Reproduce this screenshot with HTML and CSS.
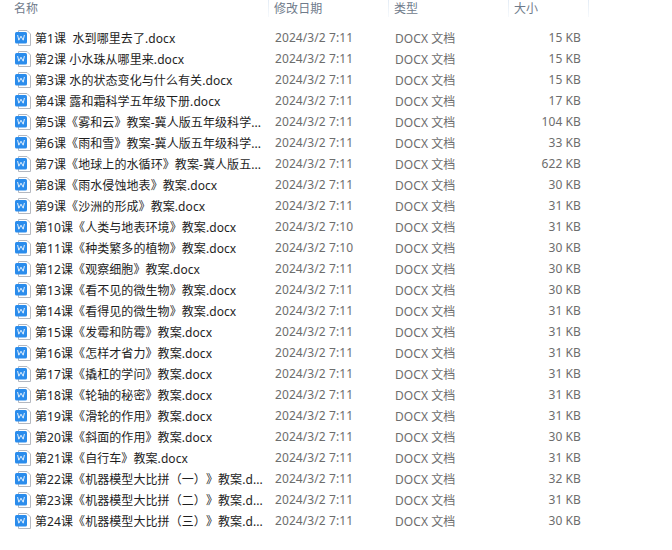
FILE: index.html
```html
<!DOCTYPE html>
<html lang="zh-CN">
<head>
  <meta charset="UTF-8">
  <title>文件列表</title>
  <link rel="stylesheet" href="styles.css">
</head>
<body>
  <svg class="sprite" width="0" height="0">
    <symbol id="docx" viewBox="0 0 16 16">
      <path d="M3.5 .5h8.5l3.5 3.5v11.5h-12z" fill="#fff" stroke="#b4b8c0"/>
      <rect x="0" y="2" width="12" height="11.5" rx="1.5" fill="#2a8cec"/>
      <path d="M2.6 5l1.2 5.2 2.2-4 2.2 4 1.2-5.2" fill="none" stroke="#e4f1fd" stroke-width="1"/>
    </symbol>
  </svg>
  <div class="header">
    <div class="head-cell">名称</div>
    <div class="head-cell">修改日期</div>
    <div class="head-cell">类型</div>
    <div class="head-cell">大小</div>
  </div>
  <div class="file-list">
    <div class="row"><span class="name"><svg class="icon"><use href="#docx"/></svg><span class="label">第1课&nbsp; 水到哪里去了.docx</span></span><span class="date">2024/3/2 7:11</span><span class="type">DOCX 文档</span><span class="size">15 KB</span></div>
    <div class="row"><span class="name"><svg class="icon"><use href="#docx"/></svg><span class="label">第2课 小水珠从哪里来.docx</span></span><span class="date">2024/3/2 7:11</span><span class="type">DOCX 文档</span><span class="size">15 KB</span></div>
    <div class="row"><span class="name"><svg class="icon"><use href="#docx"/></svg><span class="label">第3课 水的状态变化与什么有关.docx</span></span><span class="date">2024/3/2 7:11</span><span class="type">DOCX 文档</span><span class="size">15 KB</span></div>
    <div class="row"><span class="name"><svg class="icon"><use href="#docx"/></svg><span class="label">第4课 露和霜科学五年级下册.docx</span></span><span class="date">2024/3/2 7:11</span><span class="type">DOCX 文档</span><span class="size">17 KB</span></div>
    <div class="row"><span class="name"><svg class="icon"><use href="#docx"/></svg><span class="label">第5课《雾和云》教案-冀人版五年级科学...</span></span><span class="date">2024/3/2 7:11</span><span class="type">DOCX 文档</span><span class="size">104 KB</span></div>
    <div class="row"><span class="name"><svg class="icon"><use href="#docx"/></svg><span class="label">第6课《雨和雪》教案-冀人版五年级科学...</span></span><span class="date">2024/3/2 7:11</span><span class="type">DOCX 文档</span><span class="size">33 KB</span></div>
    <div class="row"><span class="name"><svg class="icon"><use href="#docx"/></svg><span class="label">第7课《地球上的水循环》教案-冀人版五...</span></span><span class="date">2024/3/2 7:11</span><span class="type">DOCX 文档</span><span class="size">622 KB</span></div>
    <div class="row"><span class="name"><svg class="icon"><use href="#docx"/></svg><span class="label">第8课《雨水侵蚀地表》教案.docx</span></span><span class="date">2024/3/2 7:11</span><span class="type">DOCX 文档</span><span class="size">30 KB</span></div>
    <div class="row"><span class="name"><svg class="icon"><use href="#docx"/></svg><span class="label">第9课《沙洲的形成》教案.docx</span></span><span class="date">2024/3/2 7:11</span><span class="type">DOCX 文档</span><span class="size">31 KB</span></div>
    <div class="row"><span class="name"><svg class="icon"><use href="#docx"/></svg><span class="label">第10课《人类与地表环境》教案.docx</span></span><span class="date">2024/3/2 7:10</span><span class="type">DOCX 文档</span><span class="size">31 KB</span></div>
    <div class="row"><span class="name"><svg class="icon"><use href="#docx"/></svg><span class="label">第11课《种类繁多的植物》教案.docx</span></span><span class="date">2024/3/2 7:10</span><span class="type">DOCX 文档</span><span class="size">30 KB</span></div>
    <div class="row"><span class="name"><svg class="icon"><use href="#docx"/></svg><span class="label">第12课《观察细胞》教案.docx</span></span><span class="date">2024/3/2 7:11</span><span class="type">DOCX 文档</span><span class="size">30 KB</span></div>
    <div class="row"><span class="name"><svg class="icon"><use href="#docx"/></svg><span class="label">第13课《看不见的微生物》教案.docx</span></span><span class="date">2024/3/2 7:11</span><span class="type">DOCX 文档</span><span class="size">30 KB</span></div>
    <div class="row"><span class="name"><svg class="icon"><use href="#docx"/></svg><span class="label">第14课《看得见的微生物》教案.docx</span></span><span class="date">2024/3/2 7:11</span><span class="type">DOCX 文档</span><span class="size">31 KB</span></div>
    <div class="row"><span class="name"><svg class="icon"><use href="#docx"/></svg><span class="label">第15课《发霉和防霉》教案.docx</span></span><span class="date">2024/3/2 7:11</span><span class="type">DOCX 文档</span><span class="size">31 KB</span></div>
    <div class="row"><span class="name"><svg class="icon"><use href="#docx"/></svg><span class="label">第16课《怎样才省力》教案.docx</span></span><span class="date">2024/3/2 7:11</span><span class="type">DOCX 文档</span><span class="size">31 KB</span></div>
    <div class="row"><span class="name"><svg class="icon"><use href="#docx"/></svg><span class="label">第17课《撬杠的学问》教案.docx</span></span><span class="date">2024/3/2 7:11</span><span class="type">DOCX 文档</span><span class="size">31 KB</span></div>
    <div class="row"><span class="name"><svg class="icon"><use href="#docx"/></svg><span class="label">第18课《轮轴的秘密》教案.docx</span></span><span class="date">2024/3/2 7:11</span><span class="type">DOCX 文档</span><span class="size">31 KB</span></div>
    <div class="row"><span class="name"><svg class="icon"><use href="#docx"/></svg><span class="label">第19课《滑轮的作用》教案.docx</span></span><span class="date">2024/3/2 7:11</span><span class="type">DOCX 文档</span><span class="size">31 KB</span></div>
    <div class="row"><span class="name"><svg class="icon"><use href="#docx"/></svg><span class="label">第20课《斜面的作用》教案.docx</span></span><span class="date">2024/3/2 7:11</span><span class="type">DOCX 文档</span><span class="size">30 KB</span></div>
    <div class="row"><span class="name"><svg class="icon"><use href="#docx"/></svg><span class="label">第21课《自行车》教案.docx</span></span><span class="date">2024/3/2 7:11</span><span class="type">DOCX 文档</span><span class="size">31 KB</span></div>
    <div class="row"><span class="name"><svg class="icon"><use href="#docx"/></svg><span class="label">第22课《机器模型大比拼（一）》教案.d...</span></span><span class="date">2024/3/2 7:11</span><span class="type">DOCX 文档</span><span class="size">32 KB</span></div>
    <div class="row"><span class="name"><svg class="icon"><use href="#docx"/></svg><span class="label">第23课《机器模型大比拼（二）》教案.d...</span></span><span class="date">2024/3/2 7:11</span><span class="type">DOCX 文档</span><span class="size">31 KB</span></div>
    <div class="row"><span class="name"><svg class="icon"><use href="#docx"/></svg><span class="label">第24课《机器模型大比拼（三）》教案.d...</span></span><span class="date">2024/3/2 7:11</span><span class="type">DOCX 文档</span><span class="size">30 KB</span></div>
  </div>
</body>
</html>
```

FILE: styles.css
```css
body {
  margin: 0;
  background: #fff;
  font-family: "Noto Sans", "Noto Sans CJK SC", sans-serif;
  font-size: 12px;
  letter-spacing: 0.08px;
  text-spacing-trim: space-all;
  color: #6d6d6d;
  overflow: hidden;
}
.sprite { display: block; }
.header {
  display: grid;
  grid-template-columns: 269px 120px 120px 80px;
  height: 17px;
  margin-bottom: 10px;
}
.head-cell {
  padding: 1px 0 0 5px;
  line-height: 16px;
  color: #6f7b8b;
  background: linear-gradient(#e4ecf5, #f6f9fc) right top / 1px 100% no-repeat;
}
.head-cell:first-child { padding-left: 14px; }
.file-list { display: block; }
.row {
  display: grid;
  grid-template-columns: 275px 120px 100px 86px;
  height: 21px;
  align-items: center;
}
.name {
  display: flex;
  align-items: center;
  padding-left: 15px;
  color: #1e1e1e;
}
.icon { width: 16px; height: 16px; margin-right: 4px; flex: none; }
.label { white-space: nowrap; }
.size { text-align: right; }
```
